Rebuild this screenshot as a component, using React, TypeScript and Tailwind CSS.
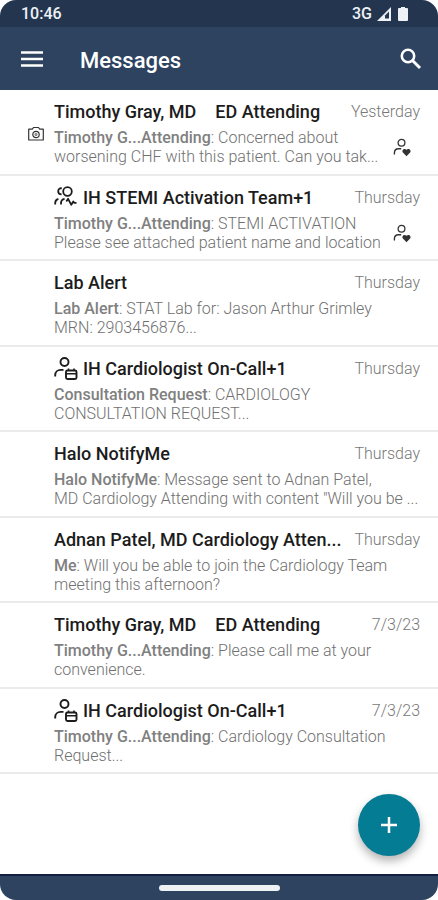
import type { ReactNode } from "react";

type RowIcon = "team" | "oncall";

interface Message {
  title: string;
  role?: string;
  icon?: RowIcon;
  date: string;
  sender: string;
  lines: [string, string];
  camera?: boolean;
  patient?: boolean;
}

const messages: Message[] = [
  { title: "Timothy Gray, MD", role: "ED Attending", date: "Yesterday", sender: "Timothy G...Attending", lines: ["Concerned about", "worsening CHF with this patient. Can you tak..."], camera: true, patient: true },
  { title: "IH STEMI Activation Team+1", icon: "team", date: "Thursday", sender: "Timothy G...Attending", lines: ["STEMI ACTIVATION", "Please see attached patient name and location"], patient: true },
  { title: "Lab Alert", date: "Thursday", sender: "Lab Alert", lines: ["STAT Lab for: Jason Arthur Grimley", "MRN: 2903456876..."] },
  { title: "IH Cardiologist On-Call+1", icon: "oncall", date: "Thursday", sender: "Consultation Request", lines: ["CARDIOLOGY", "CONSULTATION REQUEST..."] },
  { title: "Halo NotifyMe", date: "Thursday", sender: "Halo NotifyMe", lines: ["Message sent to Adnan Patel,", "MD Cardiology Attending with content \"Will you be ..."] },
  { title: "Adnan Patel, MD Cardiology Atten...", date: "Thursday", sender: "Me", lines: ["Will you be able to join the Cardiology Team", "meeting this afternoon?"] },
  { title: "Timothy Gray, MD", role: "ED Attending", date: "7/3/23", sender: "Timothy G...Attending", lines: ["Please call me at your", "convenience."] },
  { title: "IH Cardiologist On-Call+1", icon: "oncall", date: "7/3/23", sender: "Timothy G...Attending", lines: ["Cardiology Consultation", "Request..."] },
];

function Svg({ w, h, className, children }: { w: number; h: number; className?: string; children: ReactNode }) {
  return (
    <svg width={w} height={h} viewBox={`0 0 ${w} ${h}`} fill="none" stroke="currentColor" className={className} aria-hidden="true">
      {children}
    </svg>
  );
}

function TeamIcon() {
  return (
    <Svg w={24} h={24} className="shrink-0">
      <g strokeWidth="1.8">
        <circle cx="13.500" cy="5.500" r="4.300" />
        <path d="M7.800 2.300C5.600 2 4.200 3.300 4.200 5.200c0 1.900 1.300 3.200 3.400 3.200" />
        <path d="M1.200 18.500v-1.500c0-2.200 1-3.500 3.200-4.100" />
        <path d="M7 18.500v-1.500c0-2.400 1.200-3.800 3.600-4.200" />
        <path d="M12.300 15.500l1.800-2.700 3.200 6 2-3.300 1 1.300h2.200" strokeLinejoin="round" />
      </g>
    </Svg>
  );
}

function OnCallIcon() {
  return (
    <Svg w={24} h={24} className="shrink-0">
      <g strokeWidth="1.9">
        <circle cx="10.500" cy="5" r="4" />
        <path d="M1.200 19.500v-1.300c0-3.200 2.300-5.300 5.500-5.300h2.800" />
        <rect x="12" y="13.500" width="10.500" height="8.500" rx="1.500" />
        <path d="M12 16.800h10.500M14.500 11.500v2M20 11.500v2" strokeWidth="1.600" />
      </g>
    </Svg>
  );
}

function CameraIcon() {
  return (
    <Svg w={16} h={16} className="text-[#333333]">
      <path d="M0.700 3.200h3.600l1.200-1.700h5l1.200 1.700h3.600v10.800h-14.600z" strokeWidth="1.200" strokeLinejoin="round" />
      <circle cx="8" cy="8.500" r="3.200" strokeWidth="1.200" />
      <circle cx="8" cy="8.500" r="1" strokeWidth="0.800" />
    </Svg>
  );
}

function PatientIcon() {
  return (
    <Svg w={19} h={19} className="text-[#333333]">
      <circle cx="8.500" cy="4.800" r="3.400" strokeWidth="1.300" />
      <path d="M1.400 16.500v-1.500c0-2.600 1.600-4.200 4.100-4.200h2.700" strokeWidth="1.400" />
      <path d="M13.500 18.200 9.900 14.500c-1.700-2 1.300-5.100 3.600-2.700 2.300-2.400 5.300.700 3.600 2.700z" fill="currentColor" stroke="none" />
    </Svg>
  );
}

function MessageRow({ message }: { message: Message }) {
  return (
    <li className="flex border-b-2 border-[#ebebeb] pt-2.5 pr-[18px] pb-[7px] odd:pb-2">
      <div className="w-[54px] shrink-0 pt-[26px] pl-7">{message.camera && <CameraIcon />}</div>
      <div className="min-w-0 flex-1">
        <div className="flex items-center justify-between">
          <h2 className="flex min-w-0 items-center gap-[5px] text-[18px] leading-6 font-medium whitespace-nowrap text-[#1c1c1c]">
            {message.icon === "team" && <TeamIcon />}
            {message.icon === "oncall" && <OnCallIcon />}
            <span>{message.title}</span>
            {message.role && <span className="ml-3.5">{message.role}</span>}
          </h2>
          <time className="text-[16px] leading-6 font-light text-[#777777]">{message.date}</time>
        </div>
        <div className="flex items-center justify-between pt-1">
          <p className="text-[16px] leading-[19px] font-light whitespace-nowrap text-[#707070]">
            <span className="font-medium text-[#808080]">{message.sender}</span>: {message.lines[0]}
            <br />
            {message.lines[1]}
          </p>
          {message.patient && (
            <span className="mr-2">
              <PatientIcon />
            </span>
          )}
        </div>
      </div>
    </li>
  );
}

export default function App() {
  return (
    <div className="flex min-h-screen flex-col overflow-hidden rounded-2xl bg-white font-['Roboto',sans-serif]">
      <div className="flex h-[27px] items-center justify-between bg-[#24364f] pr-7 pl-[21px] text-[16px] font-medium text-[#eef2f7]">
        <span>10:46</span>
        <div className="flex items-center gap-1">
          <span>3G</span>
          <Svg w={16} h={16}>
            <path d="M1 15h14V1z" fill="currentColor" stroke="none" />
            <path d="M9 12.500V9.500l4-4v7z" fill="#24364f" stroke="none" />
          </Svg>
          <Svg w={14} h={16}>
            <path d="M5 1h4v1h2q1 0 1 1v11q0 1-1 1H3q-1 0-1-1V3q0-1 1-1h2z" fill="currentColor" stroke="none" />
          </Svg>
        </div>
      </div>
      <header className="flex h-[63px] items-center bg-[#2d435f] pr-4 pl-5 text-white">
        <button type="button" aria-label="Open menu" className="flex">
          <Svg w={24} h={24}>
            <path d="M1 5.500h22M1 12h22M1 18.500h22" strokeWidth="2.500" />
          </Svg>
        </button>
        <h1 className="flex-1 pt-1 pl-9 text-[22px] font-medium">Messages</h1>
        <button type="button" aria-label="Search" className="flex">
          <Svg w={22} h={22}>
            <circle cx="8" cy="8" r="6.200" strokeWidth="2.600" />
            <path d="m12.500 12.500 7.500 7.500" strokeWidth="3" />
          </Svg>
        </button>
      </header>
      <main className="relative flex-1">
        <ul>
          {messages.map((message, index) => (
            <MessageRow key={index} message={message} />
          ))}
        </ul>
        <button
          type="button"
          aria-label="New message"
          className="absolute right-[18px] bottom-[18px] flex size-[62px] items-center justify-center rounded-full bg-[#047c94] text-white shadow-[0_5px_10px_rgba(0,0,0,0.3)]"
        >
          <Svg w={18} h={18}>
            <path d="M9 1v16M1 9h16" strokeWidth="2.500" />
          </Svg>
        </button>
      </main>
      <footer className="flex h-[26px] items-center justify-center border-t-2 border-[#101f42] bg-[#2d435f]">
        <div className="h-[6px] w-[121px] rounded-full bg-[#edf2f5]" />
      </footer>
    </div>
  );
}
